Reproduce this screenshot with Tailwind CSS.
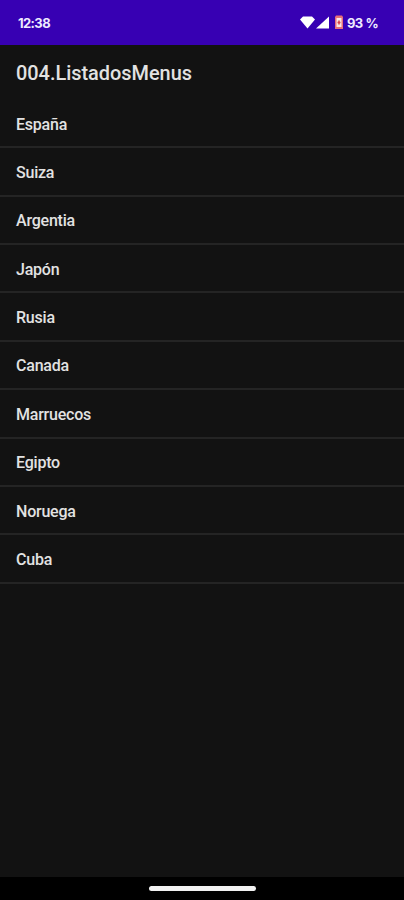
<!DOCTYPE html>
<html lang="es">
<head>
<meta charset="utf-8">
<title>004.ListadosMenus</title>
<script src="https://cdn.jsdelivr.net/npm/@tailwindcss/browser@4"></script>
</head>
<body class="bg-[#121212]">
<div class="flex h-[900px] w-[404px] flex-col overflow-hidden bg-[#121212] font-[Roboto,sans-serif] text-[#e2e2e2]">
  <header class="flex h-[44.500px] shrink-0 items-center justify-between bg-[#3700b3] pr-[27px] pl-[18px] text-[13px] font-bold text-[#eeeaff]">
    <span id="clock" class="w-8 pt-[2px] font-[Inter,sans-serif] tracking-[-0.6px]">12:38</span>
    <div class="flex items-center">
      <svg class="h-[13px] w-[15px]" viewBox="0 0 15 13" fill="#fff"><path d="M0 3.400L3 .5H12L15 3.400L7.500 12.500Z"/></svg>
      <svg class="ml-[1px] h-[13px] w-[13px]" viewBox="0 0 13 13" fill="#fff"><path d="M13 .5V12.500H0Z"/></svg>
      <svg class="ml-[6px] h-[14px] w-[8px]" viewBox="0 0 8 14"><path fill="#e66f78" d="M1 .5H7L8 2V14H0V2Z"/><rect x="1.500" y="3" width="5" height="9" fill="#fbe6e3"/><path d="M4 5.500V9.500M2.500 7.500H5.500" stroke="#d94148" stroke-width="1.500"/></svg>
      <span id="battery" class="ml-[4px] w-[30px] pt-[2px] whitespace-nowrap font-[Inter,sans-serif] tracking-[-0.7px] [word-spacing:0.6px]">93 %</span>
    </div>
  </header>
  <h1 class="flex h-[55.500px] shrink-0 items-center px-4 pt-[3px] text-[19.900px] font-medium"><span>004.ListadosMenus</span></h1>
  <ul class="text-[16px] font-medium tracking-[-0.22px] [&>li]:flex [&>li]:h-[48.370px] [&>li]:items-center [&>li]:border-b-2 [&>li]:border-[#242424] [&>li]:px-4 [&>li]:pt-[3px]">
    <li><span>España</span></li>
    <li><span>Suiza</span></li>
    <li><span>Argentia</span></li>
    <li><span>Japón</span></li>
    <li><span>Rusia</span></li>
    <li><span>Canada</span></li>
    <li><span>Marruecos</span></li>
    <li><span>Egipto</span></li>
    <li><span>Noruega</span></li>
    <li><span>Cuba</span></li>
  </ul>
  <footer class="mt-auto flex h-[23px] shrink-0 items-center justify-center bg-black">
    <div class="h-[5px] w-[107px] rounded-full bg-[#f1f1f1]"></div>
  </footer>
</div>
</body>
</html>
